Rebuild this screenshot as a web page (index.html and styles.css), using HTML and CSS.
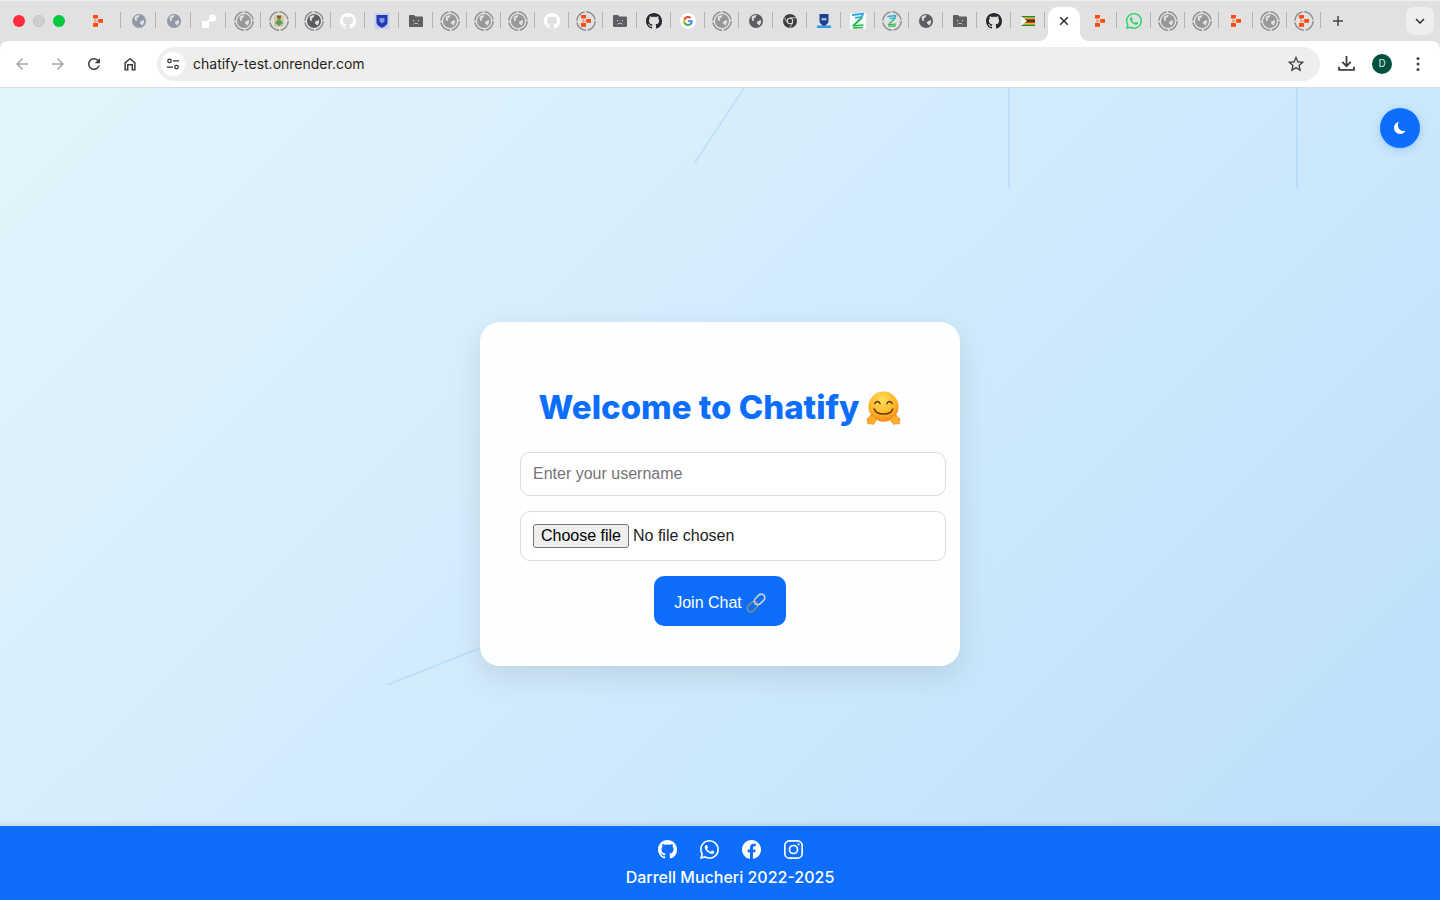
FILE: index.html
```html
<!DOCTYPE html>
<html lang="en">
<head>
  <meta charset="UTF-8" />
  <meta name="viewport" content="width=device-width, initial-scale=1" />
  <title>Chatify</title>
  <link rel="stylesheet" href="styles.css">
</head>
<body>

<svg class="sprites" aria-hidden="true">
  <symbol id="globe" viewBox="0 0 20 20">
    <circle cx="10" cy="10" r="10" fill="currentColor"/>
    <path d="M3.500 4.500c2-2 5-3 7.500-2.500L9 5 6.500 6l1 3L5 10.500zM12.500 10.500l4.500-2c.8 3-.3 6-2.500 8l-1.500-2-2-1.500z" fill="#e1e1e1"/>
  </symbol>
  <symbol id="ring" viewBox="0 0 20 20">
    <circle cx="10" cy="10" r="9.200" fill="none" stroke="#8b8b8b" stroke-width="1.400" stroke-dasharray="12.800 1.650"/>
  </symbol>
  <symbol id="render" viewBox="0 0 10 12">
    <path d="M2 2v8M2 6h6" stroke="#ff4d12" stroke-width=".6"/>
    <rect x="0" y="0" width="5" height="3.400" fill="#ff4d12"/>
    <rect x="5.300" y="4" width="4.700" height="3.800" fill="#ff4d12"/>
    <rect x="0" y="8" width="5" height="3.800" fill="#ff4d12"/>
  </symbol>
  <symbol id="github" viewBox="0 0 16 16">
    <path fill="currentColor" d="M8 0C3.580 0 0 3.580 0 8c0 3.540 2.290 6.530 5.470 7.590.4.070.55-.17.55-.38 0-.19-.01-.82-.01-1.490-2.010.37-2.530-.49-2.690-.94-.09-.23-.48-.94-.82-1.130-.28-.15-.68-.52-.01-.53.63-.01 1.080.58 1.230.82.72 1.210 1.870.87 2.330.66.07-.52.28-.87.51-1.070-1.780-.2-3.640-.89-3.640-3.950 0-.87.31-1.590.82-2.150-.08-.2-.36-1.020.08-2.120 0 0 .67-.21 2.200.82.64-.18 1.320-.27 2-.27.68 0 1.360.09 2 .27 1.530-1.040 2.200-.82 2.200-.82.44 1.100.16 1.920.08 2.120.51.56.82 1.270.82 2.150 0 3.070-1.870 3.750-3.650 3.950.29.25.54.73.54 1.480 0 1.070-.01 1.930-.01 2.200 0 .21.15.46.55.38A8.013 8.013 0 0 0 16 8c0-4.420-3.580-8-8-8z"/>
  </symbol>
  <symbol id="whatsapp" viewBox="0 0 16 16">
    <path fill="currentColor" d="M13.601 2.326A7.854 7.854 0 0 0 7.994 0C3.627 0 .068 3.558.064 7.926c0 1.399.366 2.760 1.057 3.965L0 16l4.204-1.102a7.933 7.933 0 0 0 3.790.965h.004c4.368 0 7.926-3.558 7.930-7.930A7.898 7.898 0 0 0 13.600 2.326zM7.994 14.521a6.573 6.573 0 0 1-3.356-.92l-.24-.144-2.494.654.666-2.433-.156-.251a6.560 6.560 0 0 1-1.007-3.505c0-3.626 2.957-6.584 6.591-6.584a6.560 6.560 0 0 1 4.660 1.931 6.557 6.557 0 0 1 1.928 4.660c-.004 3.639-2.961 6.592-6.592 6.592zm3.615-4.934c-.197-.099-1.170-.578-1.353-.646-.182-.065-.315-.099-.445.099-.133.197-.513.646-.627.775-.114.133-.232.148-.43.050-.197-.1-.836-.308-1.592-.985-.59-.525-.985-1.175-1.103-1.372-.114-.198-.011-.304.088-.403.087-.088.197-.232.296-.346.1-.114.133-.198.198-.33.065-.134.034-.248-.015-.347-.05-.099-.445-1.076-.612-1.470-.16-.389-.323-.335-.445-.34-.114-.007-.247-.007-.38-.007a.729.729 0 0 0-.529.247c-.182.198-.691.677-.691 1.654 0 .977.71 1.916.81 2.049.098.133 1.394 2.132 3.383 2.992.47.205.84.326 1.129.418.475.152.904.129 1.246.080.38-.058 1.171-.48 1.338-.943.164-.464.164-.86.114-.943-.049-.084-.182-.133-.38-.232z"/>
  </symbol>
  <symbol id="facebook" viewBox="0 0 16 16">
    <path fill="currentColor" d="M16 8.049c0-4.446-3.582-8.050-8-8.050C3.580 0-.002 3.603-.002 8.050c0 4.017 2.926 7.347 6.750 7.951v-5.625h-2.030V8.050H6.750V6.275c0-2.017 1.195-3.131 3.022-3.131.876 0 1.791.157 1.791.157v1.980h-1.009c-.993 0-1.303.621-1.303 1.258v1.510h2.218l-.354 2.326H9.250V16c3.824-.604 6.750-3.934 6.750-7.951z"/>
  </symbol>
  <symbol id="instagram" viewBox="0 0 16 16">
    <rect x=".7" y=".7" width="14.600" height="14.600" rx="4" fill="none" stroke="currentColor" stroke-width="1.400"/>
    <circle cx="8" cy="8" r="3.400" fill="none" stroke="currentColor" stroke-width="1.400"/>
    <circle cx="12.300" cy="3.700" r=".95" fill="currentColor"/>
  </symbol>
  <symbol id="sadfolder" viewBox="0 0 14 12">
    <path fill="currentColor" d="M1 0h4l1.500 1.500H13a1 1 0 0 1 1 1V11a1 1 0 0 1-1 1H1a1 1 0 0 1-1-1V1a1 1 0 0 1 1-1z"/>
    <path d="M4.500 9.300c.6-1.400 4.400-1.400 5 0" fill="none" stroke="#e1e1e1" stroke-width=".8"/>
    <circle cx="4.600" cy="5.600" r=".7" fill="#e1e1e1"/>
    <circle cx="9.400" cy="5.600" r=".7" fill="#e1e1e1"/>
  </symbol>
  <symbol id="zlogo" viewBox="0 0 16 16">
    <path d="M2 2l11-1.200-1 3-7 1" fill="none" stroke="#29a8e8" stroke-width="1.800"/>
    <path d="M12 4.500L3.500 12.500" fill="none" stroke="#1fb84a" stroke-width="1.800"/>
    <path d="M2.500 13l11-1M3 15l10-.5" fill="none" stroke="#1fb84a" stroke-width="1.400"/>
  </symbol>
  <symbol id="crest" viewBox="0 0 16 16">
    <path d="M2.500 2h11v7.500c0 2.600-3.500 4.300-5.500 5.500-2-1.200-5.500-2.900-5.500-5.500z" fill="#2338b5"/>
    <path d="M5.500 5h5v3.500L8 10.500 5.500 8.500z" fill="#7f95e6"/>
  </symbol>
</svg>

<div class="tabstrip">
  <div class="lights">
    <span class="light light-red"></span>
    <span class="light light-grey"></span>
    <span class="light light-green"></span>
  </div>
  <div class="tab tab-first wide"><svg class="ico-render"><use href="#render"/></svg></div>
  <div class="tab wide"><svg class="ico-globe c-blue"><use href="#globe"/></svg></div>
  <div class="tab wide"><svg class="ico-globe c-blue"><use href="#globe"/></svg></div>
  <div class="tab wide">
    <svg class="ico-globe" viewBox="0 0 14 14"><rect x="0" y="7" width="7" height="7" rx="1" fill="#fff"/><circle cx="10.500" cy="4" r="3.500" fill="#fff"/><path d="M6 8l3-3" stroke="#fff" stroke-width="2"/></svg>
  </div>
  <div class="tab wide"><svg class="ico-ring c-grey"><use href="#ring"/><use href="#globe" x="3" y="3" width="14" height="14"/></svg></div>
  <div class="tab wide">
    <svg class="ico-ring" viewBox="0 0 20 20"><use href="#ring"/><rect x="5" y="4" width="10" height="12" rx="2" fill="#d3cb9c"/><path d="M6 12l4-5 4 5-4 3z" fill="#5c9a68"/><rect x="8" y="4.500" width="4" height="3" fill="#8a5a32"/></svg>
  </div>
  <div class="tab wide"><svg class="ico-ring c-dark"><use href="#ring"/><use href="#globe" x="3" y="3" width="14" height="14"/></svg></div>
  <div class="tab"><svg class="ico-gh c-white"><use href="#github"/></svg></div>
  <div class="tab">
    <svg class="ico-gh" viewBox="0 0 16 16"><rect width="15" height="16" x=".5" fill="#c3d1f0"/><use href="#crest"/></svg>
  </div>
  <div class="tab"><svg class="ico-folder c-dark"><use href="#sadfolder"/></svg></div>
  <div class="tab"><svg class="ico-ring c-grey"><use href="#ring"/><use href="#globe" x="3" y="3" width="14" height="14"/></svg></div>
  <div class="tab"><svg class="ico-ring c-grey"><use href="#ring"/><use href="#globe" x="3" y="3" width="14" height="14"/></svg></div>
  <div class="tab"><svg class="ico-ring c-grey"><use href="#ring"/><use href="#globe" x="3" y="3" width="14" height="14"/></svg></div>
  <div class="tab"><svg class="ico-gh c-white"><use href="#github"/></svg></div>
  <div class="tab"><svg class="ico-ring"><use href="#ring"/><use href="#render" x="5" y="4" width="10" height="12"/></svg></div>
  <div class="tab"><svg class="ico-folder c-dark"><use href="#sadfolder"/></svg></div>
  <div class="tab"><svg class="ico-gh c-ink"><use href="#github"/></svg></div>
  <div class="tab">
    <svg class="ico-gh" viewBox="0 0 48 48">
      <circle cx="24" cy="24" r="24" fill="#fff"/>
      <path fill="#4285f4" d="M38 24.500c0-1-.1-2-.3-3H24v5.700h7.900a6.800 6.800 0 0 1-2.900 4.400v3.700h4.700c2.800-2.600 4.300-6.300 4.300-10.800z"/>
      <path fill="#34a853" d="M24 39c3.900 0 7.200-1.300 9.700-3.500L29 31.800c-1.300.9-3 1.400-5 1.400-3.800 0-7-2.500-8.100-6h-4.900v3.800C13.500 35.800 18.400 39 24 39z"/>
      <path fill="#fbbc05" d="M15.900 27.200a9 9 0 0 1 0-6.400V17h-4.900a15 15 0 0 0 0 13.500z"/>
      <path fill="#ea4335" d="M24 14.800c2.200 0 4.100.7 5.600 2.200l4.200-4.200A14.700 14.700 0 0 0 24 9c-5.600 0-10.500 3.200-13 8l4.900 3.800c1.100-3.500 4.300-6 8.100-6z"/>
    </svg>
  </div>
  <div class="tab"><svg class="ico-ring c-grey"><use href="#ring"/><use href="#globe" x="3" y="3" width="14" height="14"/></svg></div>
  <div class="tab"><svg class="ico-globe c-dark"><use href="#globe"/></svg></div>
  <div class="tab">
    <svg class="ico-globe" viewBox="0 0 14 14"><circle cx="7" cy="7" r="7" fill="#3c4043"/><circle cx="7" cy="7" r="3.200" fill="#e1e1e1"/><circle cx="7" cy="7" r="2.200" fill="#3c4043"/><path d="M7 3.800h6M4.200 8.600L1.500 3.500M9.800 8.600l-3 5.200" stroke="#e1e1e1" stroke-width=".8"/></svg>
  </div>
  <div class="tab">
    <svg class="ico-gh" viewBox="0 0 16 16"><rect x="1" y="12.500" width="14" height="2.500" fill="#2f9be0"/><path d="M3.500 1h9v7c0 2.500-2.500 4-4.500 5-2-1-4.500-2.500-4.500-5z" fill="#1c3f8f"/><rect x="5.500" y="5" width="5" height="2.500" fill="#9fb4dc"/></svg>
  </div>
  <div class="tab"><svg class="ico-gh"><rect width="16" height="16" fill="#f4fbfb"/><use href="#zlogo"/></svg></div>
  <div class="tab"><svg class="ico-ring"><use href="#ring"/><use href="#zlogo" x="4" y="4" width="12" height="12"/></svg></div>
  <div class="tab"><svg class="ico-globe c-dark"><use href="#globe"/></svg></div>
  <div class="tab"><svg class="ico-folder c-dark"><use href="#sadfolder"/></svg></div>
  <div class="tab"><svg class="ico-gh c-ink"><use href="#github"/></svg></div>
  <div class="tab">
    <svg class="ico-flag" viewBox="0 0 14 10">
      <rect width="14" height="10" fill="#1c8a3e"/><rect y="1.430" width="14" height="1.430" fill="#f2d21f"/><rect y="2.860" width="14" height="1.430" fill="#d8342c"/><rect y="4.290" width="14" height="1.430" fill="#222"/><rect y="5.720" width="14" height="1.430" fill="#d8342c"/><rect y="7.150" width="14" height="1.430" fill="#f2d21f"/>
      <path d="M0 0l6 5-6 5z" fill="#f5f5f5"/>
    </svg>
  </div>
  <div class="tab-active">
    <div class="tab-active-inner">
      <svg class="ico-close" viewBox="0 0 10 10"><path d="M1.200 1.200l7.600 7.600M8.800 1.200l-7.600 7.600" stroke="#222" stroke-width="1.400" fill="none"/></svg>
    </div>
  </div>
  <div class="tab"><svg class="ico-render"><use href="#render"/></svg></div>
  <div class="tab"><svg class="ico-gh c-green"><use href="#whatsapp"/></svg></div>
  <div class="tab"><svg class="ico-ring c-grey"><use href="#ring"/><use href="#globe" x="3" y="3" width="14" height="14"/></svg></div>
  <div class="tab"><svg class="ico-ring c-grey"><use href="#ring"/><use href="#globe" x="3" y="3" width="14" height="14"/></svg></div>
  <div class="tab"><svg class="ico-render"><use href="#render"/></svg></div>
  <div class="tab"><svg class="ico-ring c-grey"><use href="#ring"/><use href="#globe" x="3" y="3" width="14" height="14"/></svg></div>
  <div class="tab"><svg class="ico-ring"><use href="#ring"/><use href="#render" x="5" y="4" width="10" height="12"/></svg></div>
  <div class="newtab">
    <svg viewBox="0 0 12 12"><path d="M6 1v10M1 6h10" stroke="#444" stroke-width="1.500"/></svg>
  </div>
  <div class="tabmenu">
    <svg viewBox="0 0 10 6"><path d="M1 1l4 4 4-4" fill="none" stroke="#222" stroke-width="1.400"/></svg>
  </div>
</div>

<div class="toolbar">
  <button class="navbtn off"><svg viewBox="0 0 24 24"><path d="M20 11H7.830l5.590-5.590L12 4l-8 8 8 8 1.410-1.410L7.830 13H20v-2z"/></svg></button>
  <button class="navbtn off"><svg viewBox="0 0 24 24"><path d="M12 4l-1.410 1.410L16.170 11H4v2h12.170l-5.580 5.590L12 20l8-8z"/></svg></button>
  <button class="navbtn"><svg viewBox="0 0 24 24"><path d="M17.650 6.350A7.958 7.958 0 0 0 12 4c-4.420 0-7.990 3.580-7.990 8s3.570 8 7.990 8c3.730 0 6.840-2.550 7.730-6h-2.080A5.990 5.990 0 0 1 12 18c-3.310 0-6-2.690-6-6s2.690-6 6-6c1.660 0 3.140.69 4.220 1.780L13 11h7V4l-2.350 2.350z"/></svg></button>
  <button class="navbtn"><svg viewBox="0 0 24 24"><path d="M12 3.500L4.500 10v10.500h5.500v-6.500h4v6.500h5.500V10zM12 6l5.500 4.900v7.700H16v-6.500H8v6.500H6.500v-7.700z"/></svg></button>
  <div class="omnibox">
    <span class="siteinfo">
      <svg viewBox="0 0 16 16"><circle cx="4" cy="4.500" r="2" fill="none" stroke="#333" stroke-width="1.400"/><path d="M8 4.500h7M1 11.500h7" stroke="#333" stroke-width="1.400"/><circle cx="12" cy="11.500" r="2" fill="none" stroke="#333" stroke-width="1.400"/></svg>
    </span>
    <span class="url">chatify-test.onrender.com</span>
    <svg class="star" viewBox="0 0 24 24"><path d="M22 9.240l-7.190-.62L12 2 9.190 8.630 2 9.240l5.460 4.730L5.820 21 12 17.270 18.180 21l-1.630-7.030L22 9.240zM12 15.400l-3.760 2.270 1-4.280-3.320-2.880 4.380-.38L12 6.100l1.710 4.040 4.380.38-3.320 2.880 1 4.280L12 15.400z"/></svg>
  </div>
  <button class="navbtn dl"><svg viewBox="0 0 16 16"><path d="M8 1v9M4 6.500L8 10.500l4-4M1 11v3h14v-3" fill="none" stroke="#3c4043" stroke-width="1.700"/></svg></button>
  <button class="navbtn"><span class="avatar">D</span></button>
  <button class="navbtn dots"><svg viewBox="0 0 4 16"><circle cx="2" cy="2.500" r="1.500"/><circle cx="2" cy="8" r="1.500"/><circle cx="2" cy="13.500" r="1.500"/></svg></button>
</div>

<div class="page">
  <!-- background lines, only the ones that show in this frame -->
  <svg class="streaks">
    <line x1="744" y1="0" x2="694" y2="76"/>
    <line x1="1009" y1="0" x2="1009" y2="100"/>
    <line x1="1297" y1="0" x2="1297" y2="100"/>
    <line x1="480" y1="560" x2="387" y2="597"/>
  </svg>

  <button class="theme-toggle" aria-label="Toggle theme">
    <svg viewBox="0 0 16 16"><path fill="#fff" d="M6 .278a.768.768 0 0 1 .08.858 7.208 7.208 0 0 0-.878 3.460c0 4.021 3.278 7.277 7.318 7.277.527 0 1.040-.055 1.533-.16a.787.787 0 0 1 .81.316.733.733 0 0 1-.031.893A8.349 8.349 0 0 1 8.344 16C3.734 16 0 12.286 0 7.710 0 4.266 2.114 1.312 5.124.060A.752.752 0 0 1 6 .278z"/></svg>
  </button>

  <main class="login-card">
    <h1>Welcome to Chatify
      <svg class="emoji-hug" viewBox="0 0 36 36" role="img" aria-label="hugging face">
        <defs><radialGradient id="hugface" cx=".45" cy=".3" r=".8"><stop offset="0" stop-color="#ffe05a"/><stop offset=".6" stop-color="#fdb226"/><stop offset="1" stop-color="#f0720f"/></radialGradient></defs>
        <circle cx="18" cy="16" r="15.500" fill="url(#hugface)"/>
        <path d="M9 13c1-3 4.500-3 5.500 0M21.500 13c1-3 4.500-3 5.500 0" fill="none" stroke="#5a3208" stroke-width="1.500" stroke-linecap="round"/>
        <path d="M8.500 18.500c2.500 7 16.500 7 19 0" fill="none" stroke="#5a3208" stroke-width="1.500" stroke-linecap="round"/>
        <g fill="#fbb02a" stroke="#e8820f" stroke-width=".7">
          <path d="M1 28.500l2.500-1.500 1-2 3 .5 3 2.500-.5 3-2.500 3.500-2.500-1-3 .5-.5-2.500z"/>
          <path d="M35 28.500l-2.500-1.500-1-2-3 .5-3 2.500.5 3 2.500 3.500 2.500-1 3 .5.500-2.500z"/>
        </g>
      </svg>
    </h1>
    <form class="login-form">
      <input class="field" type="text" placeholder="Enter your username">
      <div class="field field-file">
        <label class="file-btn">Choose file<input class="file-input" type="file"></label>
        <span>No file chosen</span>
      </div>
      <button class="join-btn" type="button">Join Chat
        <svg class="emoji-link" viewBox="0 0 20 20" role="img" aria-label="link">
          <g fill="none" transform="rotate(-45 10 10)">
            <rect x="-1" y="6.500" width="12" height="7" rx="3.500" stroke="#7f8a96" stroke-width="1.700"/>
            <rect x="9" y="6.500" width="12" height="7" rx="3.500" stroke="#c6ced6" stroke-width="1.700"/>
          </g>
        </svg>
      </button>
    </form>
  </main>

  <footer class="site-footer">
    <div class="socials">
      <svg><use href="#github"/></svg>
      <svg><use href="#whatsapp"/></svg>
      <svg><use href="#facebook"/></svg>
      <svg><use href="#instagram"/></svg>
    </div>
    <p>Darrell Mucheri 2022-2025</p>
  </footer>
</div>

</body>
</html>
```

FILE: styles.css
```css
* {
  box-sizing: border-box;
}
html, body {
  height: 100%;
}
body {
  margin: 0;
  display: flex;
  flex-direction: column;
  overflow: hidden;
  background: #e1e1e1;
  font-family: 'Liberation Sans', Arial, sans-serif;
}
.sprites {
  display: none;
}

/* browser chrome */
.tabstrip {
  height: 41px;
  flex: none;
  display: flex;
  align-items: stretch;
  border-top: 1px solid #efefef;
  background: #e1e1e1;
}
.lights {
  display: flex;
  align-items: center;
  gap: 8px;
  padding-left: 13px;
  width: 81px;
}
.light {
  width: 12px;
  height: 12px;
  border-radius: 50%;
}
.light-red { background: #ff2b3e; }
.light-grey { background: #cfcfcf; border: 1px solid #c2c2c2; }
.light-green { background: #08c83d; }

.tab {
  position: relative;
  width: 34px;
  flex: none;
  display: flex;
  align-items: center;
  justify-content: center;
}
.tab::after {
  content: "";
  position: absolute;
  right: 0;
  top: 11px;
  width: 1px;
  height: 16px;
  background: #b4b4b4;
}
.tab.wide { width: 35px; }
.tab.tab-first {
  width: 40px;
  justify-content: flex-start;
  padding-left: 12px;
}
.tab-active {
  width: 38px;
  flex: none;
  display: flex;
  align-items: flex-end;
  justify-content: center;
}
.tab-active-inner {
  position: relative;
  z-index: 1;
  width: 32px;
  height: 34px;
  padding-bottom: 7px;
  background: #fff;
  border-radius: 10px 10px 0 0;
  display: flex;
  align-items: center;
  justify-content: center;
}
.tab-active-inner::before,
.tab-active-inner::after {
  content: "";
  position: absolute;
  bottom: 0;
  width: 8px;
  height: 8px;
}
.tab-active-inner::before {
  left: -8px;
  background: radial-gradient(circle at 0 0, transparent 7.500px, #fff 8px);
}
.tab-active-inner::after {
  right: -8px;
  background: radial-gradient(circle at 100% 0, transparent 7.500px, #fff 8px);
}
.ico-close { width: 10px; height: 10px; }
.ico-render { width: 10px; height: 12px; }
.ico-globe { width: 14px; height: 14px; }
.ico-ring { width: 20px; height: 20px; }
.ico-gh { width: 16px; height: 16px; }
.ico-folder { width: 14px; height: 12px; }
.ico-flag { width: 14px; height: 10px; }
.c-blue { color: #8f9ba8; }
.c-grey { color: #989898; }
.c-dark { color: #5b5e63; }
.c-white { color: #fff; }
.c-ink { color: #24292f; }
.c-green { color: #25d366; }

.newtab {
  width: 34px;
  display: flex;
  align-items: center;
  justify-content: center;
}
.newtab svg { width: 12px; height: 12px; }
.tabmenu {
  margin: 6px 6px 6px auto;
  width: 28px;
  height: 28px;
  border-radius: 8px;
  background: #eeeeee;
  display: flex;
  align-items: center;
  justify-content: center;
}
.tabmenu svg { width: 10px; height: 6px; }

.toolbar {
  height: 47px;
  flex: none;
  display: flex;
  align-items: center;
  padding: 0 4px 1px;
  background: #fff;
  border-bottom: 1px solid #d9dde0;
  border-radius: 8px 8px 0 0;
}
.navbtn {
  width: 36px;
  height: 34px;
  flex: none;
  padding: 0;
  border: none;
  background: none;
  display: flex;
  align-items: center;
  justify-content: center;
}
.navbtn svg {
  width: 18px;
  height: 18px;
  fill: #3c4043;
}
.navbtn.off svg { fill: #a6a6a6; }
.navbtn.dl svg { width: 17px; height: 17px; fill: none; }
.navbtn.dots svg { width: 4px; height: 16px; fill: #444; }
.avatar {
  width: 20px;
  height: 20px;
  border-radius: 50%;
  background: #00513f;
  color: #cfe8df;
  font: 11px Roboto, sans-serif;
  display: flex;
  align-items: center;
  justify-content: center;
}
.omnibox {
  flex: 1;
  height: 34px;
  margin: 0 8px 0 9px;
  padding: 0 14px 0 4px;
  border-radius: 17px;
  background: #efeeec;
  display: flex;
  align-items: center;
}
.siteinfo {
  width: 24px;
  height: 24px;
  border-radius: 50%;
  background: #fff;
  display: flex;
  align-items: center;
  justify-content: center;
}
.siteinfo svg { width: 14px; height: 14px; }
.url {
  margin-left: 8px;
  font: 14px Inter, sans-serif;
  color: #1f1f1f;
}
.star {
  width: 20px;
  height: 20px;
  margin-left: auto;
  fill: #3c4043;
}

/* the page itself */
.page {
  position: relative;
  flex: 1;
  display: flex;
  align-items: center;
  justify-content: center;
  background: linear-gradient(135deg, #e3f5fc 0%, #d1ebfc 50%, #bbdefb 100%);
}
.streaks {
  position: absolute;
  inset: 0;
  width: 100%;
  height: 100%;
}
.streaks line {
  stroke: #0d6efd;
  stroke-opacity: .1;
  stroke-width: 2;
}
.theme-toggle {
  position: absolute;
  top: 20px;
  right: 20px;
  width: 40px;
  height: 40px;
  padding: 0;
  border: none;
  border-radius: 50%;
  background: #0d6efd;
  box-shadow: 0 2px 8px rgba(13, 110, 253, .25);
  display: flex;
  align-items: center;
  justify-content: center;
}
.theme-toggle svg {
  width: 12px;
  height: 12px;
}
.login-card {
  position: relative;
  width: 480px;
  height: 344px;
  padding: 62px 40px 40px;
  background: rgba(255, 255, 255, .95);
  border-radius: 20px;
  box-shadow: 0 10px 30px rgba(0, 0, 0, .1);
}
.login-card h1 {
  margin: 0 0 22px;
  height: 46px;
  display: flex;
  align-items: center;
  justify-content: center;
  gap: 7px;
  font-family: Inter, sans-serif;
  font-weight: 800;
  font-size: 33px;
  line-height: 46px;
  color: #0d6efd;
}
.emoji-hug {
  width: 35px;
  height: 35px;
  flex: none;
  margin-top: 2px;
}
.login-form {
  display: flex;
  flex-direction: column;
  align-items: flex-start;
}
.field {
  width: 426px;
  height: 44px;
  margin-bottom: 15px;
  padding: 12px;
  border: 1px solid #dcdcdc;
  border-radius: 10px;
  background: #fff;
  font-family: 'Liberation Sans', Arial, sans-serif;
  font-size: 16px;
}
.field-file {
  height: 50px;
  display: flex;
  align-items: center;
  gap: 4px;
  color: #222;
}
.file-btn {
  width: 96px;
  height: 24px;
  background: #efefef;
  border: 1px solid #767676;
  border-radius: 3px;
  color: #000;
  line-height: 22px;
  text-align: center;
}
.file-input {
  display: none;
}
.join-btn {
  align-self: center;
  width: 132px;
  height: 50px;
  padding: 3px 0 0;
  border: none;
  border-radius: 10px;
  background: #0d6efd;
  color: #fff;
  font-family: 'Liberation Sans', Arial, sans-serif;
  font-size: 16px;
  display: flex;
  align-items: center;
  justify-content: center;
  gap: 4px;
}
.emoji-link {
  width: 20px;
  height: 20px;
}
.site-footer {
  position: absolute;
  left: 0;
  right: 0;
  bottom: 0;
  height: 74px;
  padding-top: 14px;
  background: #0d6efd;
  color: #fff;
  text-align: center;
  box-shadow: 0 -2px 5px rgba(0, 0, 0, .1);
}
.site-footer p {
  margin: 6px 0 0 20px;
  font-family: Inter, sans-serif;
  font-weight: 500;
  font-size: 16px;
  line-height: 24px;
}
.socials {
  display: flex;
  justify-content: center;
  gap: 23px;
  margin-left: 20px;
  color: #fff;
}
.socials svg {
  width: 19px;
  height: 19px;
}
```
